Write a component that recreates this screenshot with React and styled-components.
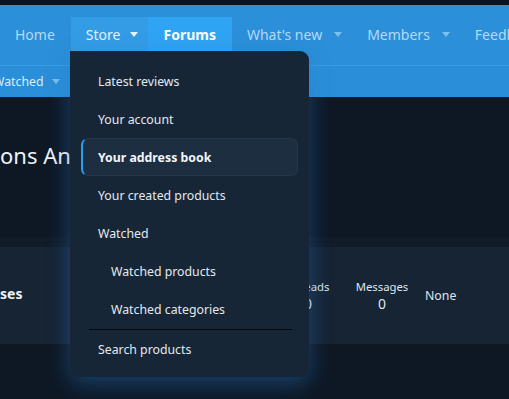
import React from "react";
import styled, { createGlobalStyle } from "styled-components";

const Global = createGlobalStyle`
  html, body { margin: 0; padding: 0; }
  body {
    background: #0e1825;
    font-family: "Noto Sans", "Open Sans", sans-serif;
    overflow: hidden;
    width: 509px;
    height: 399px;
  }
`;

const Page = styled.div`
  position: relative;
  width: 509px;
  height: 399px;
  overflow: hidden;
  background: #0e1825;
`;

const TopStrip = styled.div`
  height: 5px;
  background: #0a141e;
`;

const NavBar = styled.nav`
  height: 60px;
  background: #2b8fd9;
  display: flex;
  align-items: flex-start;
  padding-top: 12px;
  box-sizing: border-box;
  white-space: nowrap;
`;

const Tab = styled.div`
  height: 34px;
  display: flex;
  align-items: center;
  padding: 1px ${(p) => (p.$arrow ? 10 : 16)}px 0 15px;
  box-sizing: border-box;
  font-size: 14px;
  font-weight: ${(p) => (p.$selected ? 700 : 400)};
  color: ${(p) => (p.$selected ? "#ffffff" : p.$hover ? "#e3f1fc" : "#b3daf6")};
  background: ${(p) => (p.$selected ? "#2fa4f2" : p.$hover ? "#339ce4" : "transparent")};
  flex-shrink: 0;
`;

const Caret = styled.span`
  display: inline-block;
  width: 0;
  height: 0;
  border-left: 4.5px solid transparent;
  border-right: 4.5px solid transparent;
  border-top: 5px solid ${(p) => p.$color || "#7cc0ee"};
  margin-left: ${(p) => p.$gap || 12}px;
`;

const SubNav = styled.div`
  height: 32px;
  background: #2a8fd8;
  border-top: 1px solid #3a9de2;
  box-sizing: border-box;
  display: flex;
  align-items: center;
`;

const SubItem = styled.div`
  margin-left: -7px;
  font-size: 12.3px;
  color: #d8ecfb;
  display: flex;
  align-items: center;
`;

const Content = styled.div`
  display: flex;
  flex-direction: column;
`;

const Title = styled.h1`
  margin: 44px 0 0 0;
  height: 28px;
  line-height: 28px;
  font-size: 22px;
  font-weight: 400;
  color: #eef2f6;
  white-space: nowrap;
`;

const BlockHead = styled.div`
  margin-top: 68px;
  height: 10px;
  background: #111c29;
`;

const BlockBody = styled.div`
  height: 97px;
  background: #162434;
  display: flex;
  align-items: center;
`;

const BlockFoot = styled.div`
  height: 11px;
  background: #0f1822;
`;

const NodeTitle = styled.div`
  flex: 1;
  font-size: 14px;
  font-weight: 700;
  color: #eef2f6;
  padding-bottom: 5px;
`;

const Stat = styled.div`
  width: 74px;
  display: flex;
  flex-direction: column;
  align-items: center;
  color: #dfe6ee;
`;

const StatLabel = styled.div`
  font-size: 11.3px;
  line-height: 16px;
`;

const StatValue = styled.div`
  font-size: 14px;
  line-height: 18px;
`;

const Latest = styled.div`
  width: 84px;
  padding-left: 6px;
  font-size: 12.3px;
  color: #dfe6ee;
`;

const Menu = styled.div`
  position: absolute;
  left: 70px;
  top: 51px;
  width: 239px;
  height: 326px;
  box-sizing: border-box;
  padding: 11px 11px 9px;
  background: #172636;
  border-radius: 0 9px 9px 9px;
  box-shadow: 0 6px 22px rgba(36, 120, 200, 0.45);
  display: flex;
  flex-direction: column;
`;

const MenuItem = styled.div`
  height: 38px;
  flex-shrink: 0;
  box-sizing: border-box;
  display: flex;
  align-items: center;
  padding-left: ${(p) => (p.$indent ? 30 : 17)}px;
  font-size: 12.3px;
  font-weight: ${(p) => (p.$active ? 700 : 400)};
  color: ${(p) => (p.$active ? "#f2f6fa" : "#e3e9ef")};
  border-radius: 7px;
  ${(p) =>
    p.$active &&
    `
    background: #1d2e40;
    border: 1px solid #24374a;
    border-left: 2px solid #2c9ef0;
    padding-left: 15px;
  `}
`;

const Separator = styled.div`
  height: 1px;
  background: #05090d;
  margin: 1px 6px 0 8px;
  flex-shrink: 0;
`;

export default function App() {
  return (
    <Page>
      <Global />
      <TopStrip />
      <NavBar>
        <Tab>Home</Tab>
        <Tab $hover $arrow>
          Store<Caret $color="#eaf5fd" $gap={10} />
        </Tab>
        <Tab $selected>Forums</Tab>
        <Tab $arrow>
          What's new<Caret $gap={12} />
        </Tab>
        <Tab $arrow>
          Members<Caret $gap={12} />
        </Tab>
        <Tab>Feedback</Tab>
      </NavBar>
      <SubNav>
        <SubItem>
          Watched<Caret $color="#7cc0ee" $gap={8} />
        </SubItem>
      </SubNav>
      <Content>
        <Title>ons And Themes</Title>
        <BlockHead />
        <BlockBody>
          <NodeTitle>ses</NodeTitle>
          <Stat>
            <StatLabel>Threads</StatLabel>
            <StatValue>0</StatValue>
          </Stat>
          <Stat>
            <StatLabel>Messages</StatLabel>
            <StatValue>0</StatValue>
          </Stat>
          <Latest>None</Latest>
        </BlockBody>
        <BlockFoot />
      </Content>
      <Menu>
        <MenuItem>Latest reviews</MenuItem>
        <MenuItem>Your account</MenuItem>
        <MenuItem $active>Your address book</MenuItem>
        <MenuItem>Your created products</MenuItem>
        <MenuItem>Watched</MenuItem>
        <MenuItem $indent>Watched products</MenuItem>
        <MenuItem $indent>Watched categories</MenuItem>
        <Separator />
        <MenuItem>Search products</MenuItem>
      </Menu>
    </Page>
  );
}
